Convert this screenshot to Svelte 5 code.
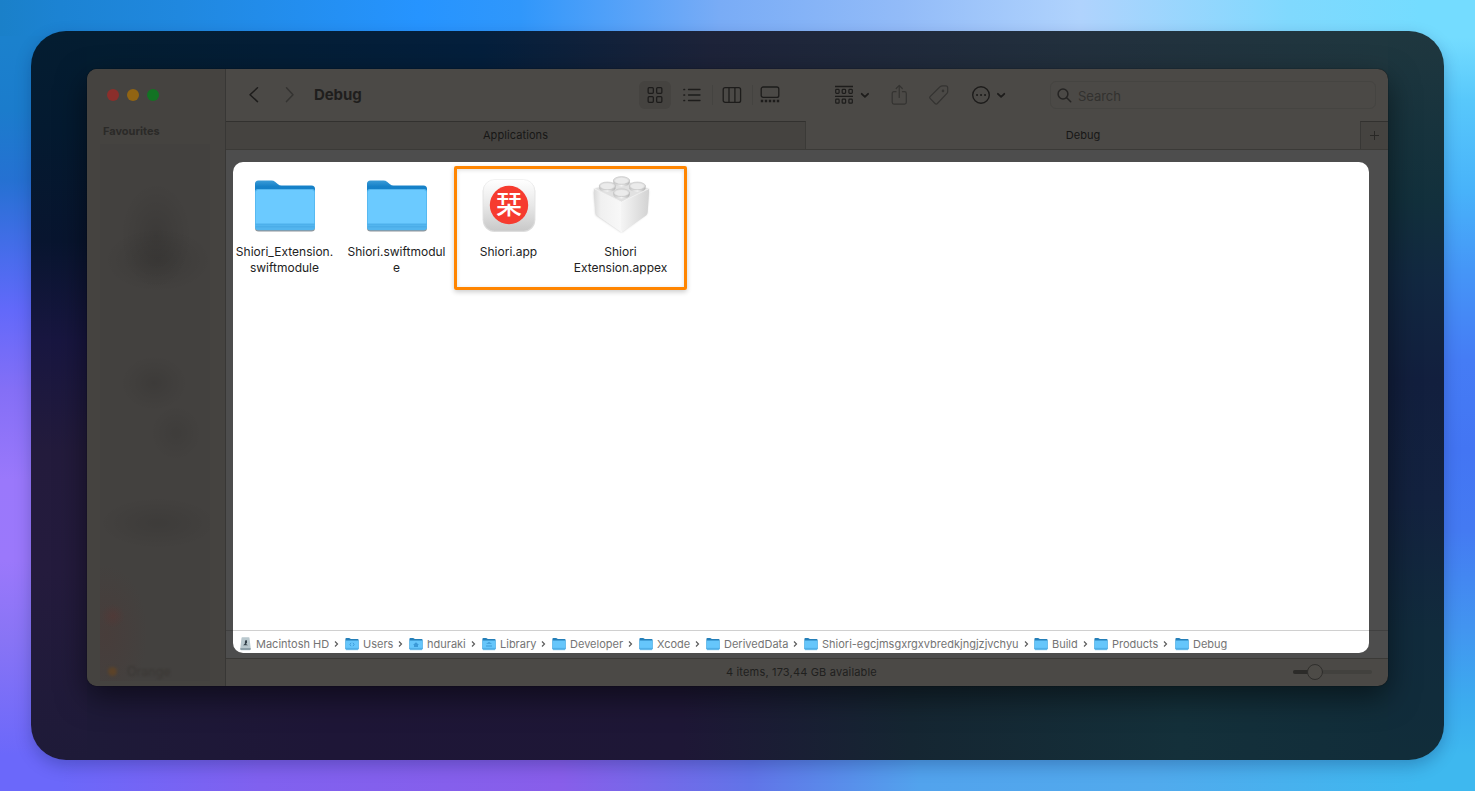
<script>
  const files = [
    { kind: 'folder', lines: ['Shiori_Extension.', 'swiftmodule'] },
    { kind: 'folder', lines: ['Shiori.swiftmodul', 'e'] },
    { kind: 'app', lines: ['Shiori.app'] },
    { kind: 'brick', lines: ['Shiori', 'Extension.appex'] }
  ];
  const crumbs = [
    { name: 'Macintosh HD', width: 105, kind: 'disk' },
    { name: 'Users', width: 64, kind: 'users' },
    { name: 'hduraki', width: 73, kind: 'home' },
    { name: 'Library', width: 70, kind: 'library' },
    { name: 'Developer', width: 87 },
    { name: 'Xcode', width: 67 },
    { name: 'DerivedData', width: 98 },
    { name: 'Shiori-egcjmsgxrgxvbredkjngjzjvchyu', width: 230 },
    { name: 'Build', width: 60 },
    { name: 'Products', width: 81 },
    { name: 'Debug', width: 60 }
  ];
</script>

<div class="desktop">
  <div class="stage">
    <div class="window">
      <aside>
        <div class="lights"><i class="red"></i><i class="yellow"></i><i class="green"></i></div>
        <div class="favourites">Favourites</div>
        <div class="smudge"><div class="tag"><i></i><span>Orange</span></div></div>
      </aside>
      <main>
        <header>
          <svg class="back" width="60" height="20" viewBox="0 0 60 20" fill="none" stroke-width="1.5" stroke-linecap="round" stroke-linejoin="round">
            <path d="M12.500 2.800 5 9.700l7.500 6.900" stroke="#1d1c1b" /><path d="m41.500 2.800 6.500 6.900-6.500 6.900" stroke="#343331" />
          </svg>
          <h1>Debug</h1>
          <div class="views">
            <span class="view selected">
              <svg width="32" height="28" viewBox="0 0 32 28" fill="none" stroke="#1d1c1b" stroke-width="1.300">
                <rect x="9.150" y="6.650" width="5.200" height="5.700" rx="1" /><rect x="17.650" y="6.650" width="5.200" height="5.700" rx="1" />
                <rect x="9.150" y="15.650" width="5.200" height="5.700" rx="1" /><rect x="17.650" y="15.650" width="5.200" height="5.700" rx="1" />
              </svg>
            </span>
            <span class="view list">
              <svg width="20" height="20" viewBox="0 0 20 20" stroke="#1d1c1b" stroke-width="1.300" stroke-linecap="round">
                <path d="M6.500 4.500h11.500M6.500 10h11.500M6.500 15.500h11.500" /><path d="M2 4.500h.5M2 10h.5M2 15.500h.5" stroke-width="1.700" />
              </svg>
            </span>
            <span class="view columns">
              <svg width="20" height="18" viewBox="0 0 20 18" fill="none" stroke="#1d1c1b" stroke-width="1.300">
                <rect x="1.200" y="1.700" width="17.400" height="14.700" rx="2" /><path d="M7 2v14M12.900 2v14" />
              </svg>
            </span>
            <span class="view gallery">
              <svg width="20" height="18" viewBox="0 0 20 18" fill="none" stroke="#1d1c1b" stroke-width="1.300">
                <rect x="1.200" y="1" width="17.600" height="10.400" rx="2" />
                <path d="M.8 15h2.400M4.800 15h2.400M8.800 15h2.400M12.800 15h2.400M16.800 15h2.400" stroke-width="2.400" />
              </svg>
            </span>
          </div>
          <svg class="group" width="36" height="22" viewBox="0 0 36 22" fill="none" stroke="#1d1c1b" stroke-width="1.200">
            <path d="M1 2.500h18M1 12.300h18" stroke-width="1.300" />
            <rect x="1.700" y="5.400" width="3.400" height="4" rx=".8" /><rect x="8.200" y="5.400" width="3.400" height="4" rx=".8" /><rect x="14.900" y="5.400" width="3.400" height="4" rx=".8" />
            <rect x="1.700" y="15.200" width="3.400" height="4" rx=".8" /><rect x="8.200" y="15.200" width="3.400" height="4" rx=".8" /><rect x="14.900" y="15.200" width="3.400" height="4" rx=".8" />
            <path d="m27.700 9.800 3.200 3.100 3.200-3.100" stroke-width="1.800" stroke-linecap="round" stroke-linejoin="round" />
          </svg>
          <svg class="share" width="17" height="22" viewBox="0 0 17 22" fill="none" stroke="#343331" stroke-width="1.200" stroke-linecap="round" stroke-linejoin="round">
            <path d="M5 7.700H3Q1.200 7.700 1.200 9.500v8.800q0 1.800 1.800 1.800h10.500q1.800 0 1.800-1.800V9.500q0-1.800-1.800-1.800h-2M8.250 13.500V1.500M5.200 4.500l3.050-3.100 3.050 3.100" />
          </svg>
          <svg class="label" width="20" height="21" viewBox="0 0 20 21" fill="none" stroke="#343331" stroke-width="1.200" stroke-linejoin="round">
            <path d="M11 1.800Q12 .8 13.500.8h3.200q2 0 2 2v3.700q0 1.200-1 2.200L8.400 18.500q-1.200 1.200-2.400 0L1.300 13.700q-1.200-1.200 0-2.400Z" /><circle cx="14" cy="5.900" r=".7" fill="#343331" />
          </svg>
          <svg class="more" width="36" height="20" viewBox="0 0 36 20" fill="none" stroke="#1d1c1b" stroke-width="1.400">
            <circle cx="10" cy="10" r="8.300" /><path d="M6 10h.1M10 10h.1M14 10h.1" stroke-width="2" stroke-linecap="round" /><path d="m26.900 8.800 3.200 3.100 3.200-3.100" stroke-width="1.800" stroke-linecap="round" stroke-linejoin="round" />
          </svg>
          <div class="search">
            <svg width="15" height="15" viewBox="0 0 15 15" fill="none" stroke="#252423" stroke-width="1.500" stroke-linecap="round"><circle cx="6" cy="6" r="4.900" /><path d="m9.700 9.700 4 4" /></svg>
            <span>Search</span>
          </div>
        </header>
        <div class="tabs">
          <div class="tab inactive">Applications</div>
          <div class="tab">Debug</div>
          <div class="add"><svg width="11" height="11" viewBox="0 0 11 11" stroke="#292826" stroke-width="1"><path d="M5.500 1v9M1 5.500h9" /></svg></div>
        </div>
        <div class="content">
          <section class="panel">
            <div class="files">
              {#each files as file}
                <div class="file">
                  <div class="picture">
                    {#if file.kind === 'folder'}
                      <svg width="64" height="64" viewBox="0 0 64 64">
                        <defs>
                          <linearGradient id="tab" x2="0" y2="1"><stop stop-color="#3b9cd8" /><stop offset=".13" stop-color="#1681c8" /><stop offset="1" stop-color="#087dc6" /></linearGradient>
                        </defs>
                        <path d="M2 11q0-3.500 3.500-3.500h13q2 0 3.500 1.200l3 2.600q1.500 1.200 3.500 1.200h30q3.500 0 3.500 3.500V54q0 3.500-3.500 3.500h-53Q2 57.500 2 54Z" transform="translate(0 .9)" fill="#8f969b" />
                        <path d="M2 11q0-3.500 3.500-3.500h13q2 0 3.500 1.200l3 2.600q1.500 1.200 3.500 1.200h30q3.500 0 3.500 3.500V54H2Z" fill="url(#tab)" />
                        <path d="M2 18.800q0-2.800 2.800-2.800h54.400q2.800 0 2.800 2.800V54q0 3.200-3.200 3.200H5.200Q2 57.200 2 54Z" fill="#53b5ee" />
                        <path d="M2.800 19.500q0-2.500 2.500-2.500h53.400q2.500 0 2.500 2.500v31.500H2.800Z" fill="#6bcaff" />
                        <path d="M2.500 51h59M2.500 53.800h59" stroke="#43a6e4" stroke-width=".7" />
                      </svg>
                    {:else if file.kind === 'app'}
                      <svg width="64" height="64" viewBox="0 0 64 64">
                        <defs><linearGradient id="tile" x2="0" y2="1"><stop stop-color="#fff" /><stop offset=".5" stop-color="#e8e8e8" /><stop offset="1" stop-color="#c8c8c8" /></linearGradient></defs>
                        <rect x="5.700" y="7" width="52.600" height="52" rx="12" fill="#000" opacity=".14" />
                        <rect x="6.200" y="6.500" width="51.600" height="51.600" rx="11.500" fill="url(#tile)" stroke="#e4e4e4" stroke-width=".5" />
                        <circle cx="32" cy="32" r="19.200" fill="#f63b2f" />
                        <text x="32" y="41.400" text-anchor="middle" class="kanji">栞</text>
                      </svg>
                    {:else}
                      <svg width="64" height="64" viewBox="0 0 64 64">
                        <defs>
                          <linearGradient id="left"><stop stop-color="#dadada" /><stop offset=".25" stop-color="#f0f0f0" /><stop offset="1" stop-color="#f8f8f8" /></linearGradient>
                          <linearGradient id="right" x1="1" x2="0"><stop stop-color="#d2d2d2" /><stop offset=".6" stop-color="#e7e7e7" /><stop offset="1" stop-color="#f4f4f4" /></linearGradient>
                          <linearGradient id="stud"><stop stop-color="#c4c4c4" /><stop offset=".5" stop-color="#f3f3f3" /><stop offset="1" stop-color="#b4b4b4" /></linearGradient>
                          <filter id="soft"><feGaussianBlur stdDeviation="1.200" /></filter>
                        </defs>
                        <path d="M5 18 32.500 8l27 10-2 23-25 18L7 42Z" fill="#777" opacity=".5" filter="url(#soft)" />
                        <path d="M4.800 15.500 32.500 28v31.500L8 42.500Q6.500 41.500 6.300 39Z" fill="url(#left)" />
                        <path d="M60.200 15.500 32.500 28v31.500L57 42.500q1.500-1 1.700-3.500Z" fill="url(#right)" />
                        <path d="M4.800 15.500 29.500 7.700q3-1 6 0L60.200 15.500 32.500 29Z" fill="#e1e1e1" stroke="#f7f7f7" stroke-width=".7" />
                        <path d="M32.500 29v30" stroke="#fff" stroke-width=".7" opacity=".8" />
                        {#each [[32.500, 7.800], [18.300, 13.200], [48.300, 13.200], [32.500, 20]] as stud}
                          <g transform="translate({stud[0]} {stud[1]})">
                            <path d="M-8.200-1v3Q-7.500 5.600 0 5.600q7.500 0 8.200-3.600v-3Z" fill="url(#stud)" />
                            <ellipse cy="-.3" rx="8.100" ry="3.900" fill="#dedede" stroke="#bcbcbc" stroke-width=".5" /><ellipse cy="-.1" rx="6.500" ry="2.900" fill="#ebebeb" />
                          </g>
                        {/each}
                      </svg>
                    {/if}
                  </div>
                  {#each file.lines as line}<div class="name">{line}</div>{/each}
                </div>
              {/each}
            </div>
            <div class="marker"></div>
            <div class="path">
              {#each crumbs as crumb, i}
                <div class="crumb" style="width: {crumb.width}px">
                  {#if crumb.kind === 'disk'}
                    <svg class="disk" width="11" height="14" viewBox="0 0 11 14"><path d="M1.500 1q0-.7.7-.7h6.600q.7 0 .7.700L10.700 11v1.200q0 1-1 1H1.300q-1 0-1-1V11Z" fill="#b9c8ce" /><path d="M.4 11h10.200v1.200q0 .8-.9.800H1.300q-.9 0-.9-.8Z" fill="#8da0a9" /><path d="M5 3.500 7 3.200v2.500L6 7l2 1.300H3.100L4.800 6.800Z" fill="#34414a" /></svg>
                  {:else}
                    <svg width="14" height="14" viewBox="0 0 14 14">
                      <path d="M.4 2Q.4 1 1.400 1H4q.7 0 1.200.6l.5.5h6.900q1 0 1 1V12H.4Z" fill="#247fb9" />
                      <path d="M.4 3.500h13.200v8.300q0 1-1 1H1.400q-1 0-1-1Z" fill="#66c6fb" /><path d="M.6 11.400h12.800M.9 12.700h12.200" stroke="#3d9cd7" stroke-width=".6" />
                      {#if crumb.kind === 'users'}<path d="M6 5.800Q3.800 7.500 6 9.200M8 5.800q2.200 1.700 0 3.400" stroke="#3c9ad8" stroke-width=".9" fill="none" />{/if}
                      {#if crumb.kind === 'home'}<path d="m7 5.300 3 2.600H9v2H5v-2H4Z" fill="#3c9ad8" />{/if}
                      {#if crumb.kind === 'library'}<path d="m7 5 3 1.800H4ZM4 9.500h6v-1H4Z" fill="#3c9ad8" />{/if}
                    </svg>
                  {/if}
                  <span>{crumb.name}</span>
                  {#if i < crumbs.length - 1}<svg class="chev" width="5" height="8" viewBox="0 0 5 8" fill="none" stroke="#5c5c5c" stroke-width="1.200"><path d="m1 1.500 2.500 2.500L1 6.500" /></svg>{/if}
                </div>
              {/each}
            </div>
          </section>
        </div>
        <footer>
          <span>4 items, 173,44 GB available</span>
          <svg width="82" height="18" viewBox="0 0 82 18" fill="none" stroke-linecap="round"><path d="M4 9h75" stroke="#42413e" stroke-width="4" /><path d="M4 9h16" stroke="#2c2b29" stroke-width="4" /><circle cx="24" cy="9" r="7.500" fill="#4d4b47" stroke="#302f2d" /></svg>
        </footer>
      </main>
    </div>
  </div>
</div>

<style>
  :global(body) { margin: 0; overflow: hidden; }
  * { box-sizing: border-box; }
  svg { display: block; flex: none; }
  .desktop {
    width: 1475px; height: 791px; padding: 31px; overflow: hidden;
    font-family: Inter, "Noto Sans CJK JP", sans-serif;
    background:
      linear-gradient(90deg, #1a80c9 0, #1c83d3 60px, #2088df 180px, #2694ff 420px, #3097fb 520px, #79acf6 720px, #92bbf8 900px, #b0d3fd 1080px, #80d9fe 1290px, #74dcff 1420px, #74dcff 1475px) 0 0 / 100% 36px no-repeat,
      linear-gradient(90deg, #6b68fa 0, #6b68fa 60px, #8061ef 260px, #885eea 560px, #6174e8 750px, #52a3ed 920px, #51aaed 1150px, #3eb8ef 1420px, #3eb8ef 1475px) 0 100% / 100% 36px no-repeat,
      linear-gradient(180deg, #1b81cd 0, #1b81cd 40px, #1b7ccc 110px, #2571d2 180px, #4a6ced 260px, #6269fa 310px, #846ff6 390px, #9a78fb 480px, #9b78fb 560px, #8874f5 640px, #6b68fa 755px) 0 0 / 50% 100% no-repeat,
      linear-gradient(180deg, #74dcff 0, #74dcff 38px, #58c8fb 100px, #48b3fa 190px, #4596f7 270px, #457cf5 360px, #4375f3 450px, #447af2 530px, #4295f0 630px, #3cabef 700px, #3eb8ef 755px) 100% 0 / 50% 100% no-repeat;
  }
  .stage {
    width: 1413px; height: 729px; padding: 38px 56px; border-radius: 35px;
    background:
      linear-gradient(180deg, #041d31 0, #041a30 100px, #08152f 210px, #181640 310px, #231b3c 420px, #241b3d 540px, #1e1a38 729px) 0 0 / 56px 100% no-repeat,
      linear-gradient(180deg, #1f373f 0, #17333d 100px, #12303c 170px, #122841 250px, #121f3e 350px, #13223f 470px, #112b3c 600px, #112d3a 729px) 100% 0 / 56px 100% no-repeat,
      linear-gradient(90deg, #041d31 0, #041d31 56px, #041f3c 450px, #1d2339 680px, #22303d 1050px, #1f373f 1357px, #1f373f 1413px) 0 0 / 100% 60px no-repeat,
      linear-gradient(90deg, #1e1a38 0, #1e1a38 56px, #1e1637 300px, #1e1736 650px, #152632 880px, #14303a 1150px, #112d3a 1357px) 0 100% / 100% 91px no-repeat;
    box-shadow: 0 6px 16px rgba(0, 20, 70, .25);
  }
  .window { width: 1301px; height: 617px; display: flex; border-radius: 10px; overflow: hidden; background: #4b4946; box-shadow: 0 0 1px #000, 0 11px 30px rgba(0, 0, 0, .5); }
  aside { width: 139px; border-right: 1px solid #383735; background: #454340; display: flex; flex-direction: column; }
  .lights { display: flex; gap: 8px; padding: 20px 0 0 20px; height: 54px; }
  .lights i { width: 12px; height: 12px; border-radius: 50%; }
  .red { background: #8b2e2b; } .yellow { background: #916412; } .green { background: #127323; }
  .favourites { padding-left: 16px; height: 21px; line-height: 16px; font-size: 11px; font-weight: 700; color: #2b2a28; }
  .smudge {
    margin: 0 15px 5px 13px; flex: 1; display: flex; align-items: flex-end;
    background:
      radial-gradient(ellipse 36px 54px at 56px 92px, #0000001c, #0000000c 55%, transparent),
      radial-gradient(ellipse 54px 32px at 58px 116px, #0000001c, #0000000c 55%, transparent),
      radial-gradient(ellipse 34px 28px at 54px 239px, #00000018, #0000000a 55%, transparent),
      radial-gradient(ellipse 26px 28px at 76px 289px, #00000012, #00000008 55%, transparent),
      radial-gradient(ellipse 60px 26px at 58px 379px, #00000016, #0000000a 55%, transparent),
      radial-gradient(circle 12px at 13px 472px, #6a2d2b40, transparent),
      radial-gradient(ellipse 42px 70px at 6px 490px, #582f2c38, transparent),
      #43413f;
  }
  .tag { height: 20px; display: flex; align-items: center; gap: 10px; padding-left: 8px; font-size: 12.500px; color: #3a3734; }
  .tag i { width: 9px; height: 9px; background: #5c4329; border-radius: 50%; filter: blur(1.500px); }
  .tag span { filter: blur(.8px); }
  main { width: 1162px; display: flex; flex-direction: column; }
  header { height: 52px; display: flex; align-items: center; padding-left: 19px; }
  h1 { margin: 0 0 0 9px; width: 325px; font-size: 15px; line-height: 20px; font-weight: 700; letter-spacing: -.1px; color: #1f1e1d; }
  .views { display: flex; align-items: center; width: 149px; height: 28px; }
  .view { display: flex; align-items: center; justify-content: center; }
  .selected { width: 32px; height: 28px; border-radius: 6px; background: #454340; }
  .list { width: 42px; height: 20px; padding-left: 1px; border-right: 1px solid #444340; }
  .columns { width: 40px; height: 20px; padding-right: 1px; border-right: 1px solid #444340; }
  .gallery { width: 35px; padding-right: 1px; }
  .group { margin-left: 46px; }
  .share { margin-left: 21px; }
  .label { margin-left: 21px; }
  .more { margin-left: 22px; }
  .search { display: flex; align-items: center; gap: 6px; width: 326px; height: 28px; margin-left: 43px; padding-left: 6px; border: 1px solid #454441; border-radius: 6px; font-size: 13px; letter-spacing: -.05px; color: #32312f; }
  .search span { padding-top: 2px; }
  .tabs { height: 29px; display: flex; border-bottom: 1px solid #3b3a37; font-size: 11px; color: #171716; }
  .tab { flex: 1; display: flex; align-items: center; justify-content: center; letter-spacing: .08px; }
  .inactive { flex: 0 0 580px; padding-bottom: 1px; background: #454340; border-top: 1px solid #32312f; border-right: 1px solid #3b3a37; }
  .add { width: 28px; display: flex; align-items: center; justify-content: center; background: #454340; border-top: 1px solid #32312f; border-left: 1px solid #383735; }
  .content { height: 508px; padding: 12px 19px 4px 7px; background: linear-gradient(#404040, #404040) 0 480px / 100% 1px no-repeat #4d4d4d; }
  .panel { position: relative; height: 491.400px; display: flex; flex-direction: column; border-radius: 10px; background: #fff; overflow: hidden; }
  .files { height: 468px; flex: none; display: grid; grid-template-columns: repeat(4, 103px); column-gap: 9px; }
  .file { display: flex; flex-direction: column; align-items: center; padding-top: 11px; }
  .picture { height: 71px; }
  .name { height: 16px; line-height: 16px; font-size: 12px; letter-spacing: 0; color: #222; white-space: nowrap; }
  .kanji { font-family: "Noto Sans CJK JP", sans-serif; font-size: 26px; font-weight: 500; fill: #fff; }
  .marker { position: absolute; left: 221px; top: 4px; width: 233px; height: 124px; border: 3px solid #ff8500; border-radius: 2px; box-shadow: 0 2px 5px #0003, inset 0 1px 4px #0002; }
  .path { height: 24px; flex: none; display: flex; align-items: center; border-top: 1px solid #d0d0d0; padding: 3px 0 0 7px; }
  .crumb { display: flex; align-items: center; flex: none; font-size: 11px; line-height: 16px; color: #747474; white-space: nowrap; }
  .crumb span { margin-left: 4px; }
  .disk { margin-right: 1px; }
  .chev { margin-left: 5px; }
  footer { height: 28px; border-top: 1px solid #3b3a37; display: flex; align-items: center; padding: 0 0 1px 500px; font-size: 11px; letter-spacing: .17px; color: #20201e; }
  footer span { width: 565px; }
</style>
